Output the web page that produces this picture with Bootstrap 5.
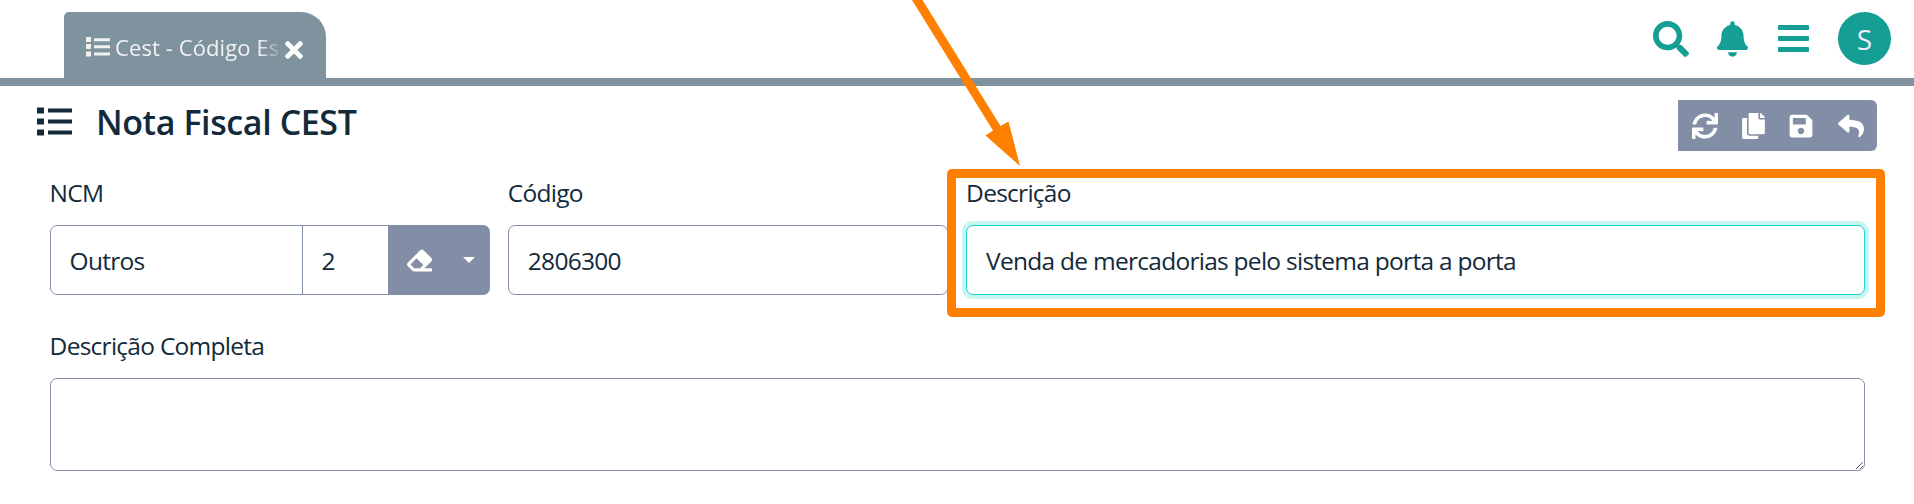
<!DOCTYPE html>
<html lang="pt-BR">
<head>
<meta charset="utf-8">
<meta name="viewport" content="width=device-width, initial-scale=1">
<title>Nota Fiscal CEST</title>
<link href="https://cdn.jsdelivr.net/npm/bootstrap@5.3.0/dist/css/bootstrap.min.css" rel="stylesheet">
<style>
  :root { --ink: #132a3a; --slate: #7e939d; --steel: #828ea6; --teal: #159e94; --mark: #ff8000; }
  body { font-family: "Open Sans", "Noto Sans", sans-serif; font-size: 24.5px; letter-spacing: -.73px; color: var(--ink); background: #fff; overflow: hidden; }
  svg { display: block; fill: currentColor; flex: none; }
  .topbar { height: 86px; border-bottom: 8px solid var(--slate); padding: 12px 23px 0 64px; }
  .doc-tab { width: 262px; height: 66px; padding: 0 23px 0 22px; background: var(--slate); color: #f1f1f1; border-radius: 5px 25px 0 0; font-size: 22px; }
  .doc-tab .tab-label { width: 168px; margin-left: 5px; letter-spacing: .1px; line-height: 30px; margin-top: 3px; -webkit-mask-image: linear-gradient(90deg, #000 145px, transparent 168px); mask-image: linear-gradient(90deg, #000 145px, transparent 168px); }
  .doc-tab .tab-close { margin-left: 2px; margin-top: 10px; color: #fff; }
  .doc-tab .tab-icon { margin-top: 4px; }
  .top-icons { height: 53px; color: var(--teal); }
  .avatar { width: 53px; height: 53px; background: var(--teal); color: #eef; font-size: 28px; letter-spacing: 0; margin-left: 29px; }
  .page-head { height: 66px; padding: 14px 37px 0; }
  .page-head h1 { font-size: 34px; font-weight: 600; letter-spacing: -.4px; line-height: 46px; margin: -1px 0 0 24px; }
  .page-head .head-icon { margin-top: -2px; }
  .tools { height: 51px; }
  .tools .btn { border: 0; border-radius: 0; padding: 0 12px; display: flex; align-items: center; }
  .btn-steel, .btn-steel:hover { background: var(--steel); color: #fff; }
  .tools .btn:last-child { border-radius: 0 6px 6px 0; padding-left: 13px; }
  .page-form { padding: 24px 49.4px 0 49.6px; }
  .page-form .row { --bs-gutter-x: 18px; }
  .page-form label { display: block; line-height: 34px; margin-bottom: 15px; }
  .page-form .form-control { height: 70px; font-size: inherit; letter-spacing: inherit; color: var(--ink); border-color: var(--steel); border-radius: 7px; padding: 0 19px; box-shadow: none; }
  .page-form .input-group .form-control:first-child { border-radius: 7px 0 0 7px; flex: 0 0 253px; }
  .page-form .input-group .form-control:nth-child(2) { border-radius: 0; flex: 0 0 87px; }
  .page-form .input-group .btn { border: 0; padding: 0; height: 70px; display: flex; align-items: center; }
  .erase { width: 64px; justify-content: center; }
  .more { width: 39px; border-radius: 0 7px 7px 0 !important; }
  .more::after { margin: 0 0 0 12px !important; border-top-width: 6px !important; border-left-width: 6px !important; border-right-width: 6px !important; }
  .page-form .form-control.active-field { border-color: #20d3c8; box-shadow: 0 0 0 4px #c8f6f1; }
  .page-form textarea.form-control { height: 93px; min-height: 93px; resize: vertical; }
  .second-row { margin-top: 34px; }
  .frame { position: absolute; left: -19px; top: -7px; width: 938px; height: 148px; border: 9px solid var(--mark); border-radius: 5px; pointer-events: none; }
  .pointer { position: absolute; left: 900px; top: 0; color: var(--mark); pointer-events: none; }
</style>
</head>
<body>
<header class="topbar d-flex align-items-start justify-content-between">
  <div class="doc-tab d-flex align-items-center">
    <svg class="tab-icon" width="24" height="20" viewBox="0 0 24 20"><path d="M0 0h5v5H0zM0 7h5v5H0zM0 14.500h5v5H0zM8 1.300h16v3H8zM8 8.300h16v3H8zM8 15.500h16v3H8z"/></svg>
    <div class="tab-label overflow-hidden text-nowrap">Cest - Código Esp</div>
    <svg class="tab-close" width="18" height="26" viewBox="0 0 352 512"><path d="M242.72 256l100.07-100.07c12.28-12.28 12.28-32.19 0-44.48l-22.24-22.24c-12.28-12.28-32.19-12.28-44.48 0L176 189.28 75.93 89.21c-12.28-12.28-32.19-12.28-44.48 0L9.21 111.45c-12.28 12.28-12.28 32.19 0 44.48L109.28 256 9.21 356.07c-12.28 12.28-12.28 32.19 0 44.48l22.24 22.24c12.28 12.28 32.2 12.28 44.48 0L176 322.72l100.07 100.07c12.28 12.28 32.2 12.28 44.48 0l22.24-22.24c12.28-12.28 12.28-32.19 0-44.48L242.72 256z"/></svg>
  </div>
  <nav class="top-icons d-flex align-items-center">
    <svg width="36" height="36" viewBox="0 0 512 512"><path d="M505 442.7L405.3 343c-4.5-4.5-10.6-7-17-7H372c27.6-35.3 44-79.7 44-128C416 93.1 322.9 0 208 0S0 93.1 0 208s93.1 208 208 208c48.3 0 92.7-16.4 128-44v16.3c0 6.4 2.5 12.5 7 17l99.7 99.7c9.4 9.4 24.6 9.4 33.9 0l28.3-28.3c9.4-9.4 9.4-24.6.1-34zM208 336c-70.7 0-128-57.2-128-128 0-70.7 57.2-128 128-128 70.7 0 128 57.2 128 128 0 70.7-57.2 128-128 128z"/></svg>
    <svg style="margin-left:28px" width="31" height="36" viewBox="0 0 448 512"><path d="M224 512c35.32 0 63.97-28.65 63.97-64H160.03c0 35.35 28.65 64 63.97 64zm215.39-149.71c-19.32-20.76-55.47-51.99-55.47-154.29 0-77.7-54.48-139.9-127.94-155.16V32c0-17.67-14.32-32-31.98-32s-31.98 14.33-31.98 32v20.84C118.56 68.1 64.08 130.3 64.08 208c0 102.3-36.15 133.53-55.47 154.29-6 6.45-8.66 14.16-8.61 21.71.11 16.4 12.98 32 32.1 32h383.8c19.12 0 32-15.6 32.1-32 .05-7.55-2.61-15.27-8.61-21.71z"/></svg>
    <svg style="margin-left:30px" width="31" height="27" viewBox="0 0 31 27"><rect width="31" height="5" rx="1"/><rect y="11" width="31" height="5" rx="1"/><rect y="22" width="31" height="5" rx="1"/></svg>
    <div class="avatar rounded-circle d-flex align-items-center justify-content-center">S</div>
  </nav>
</header>

<section class="page-head d-flex align-items-start justify-content-between">
  <div class="d-flex align-items-center">
    <svg class="head-icon" width="35" height="29" viewBox="0 0 35 29"><path d="M0 .5h7v6H0zM0 11.500h7v6H0zM0 22.500h7v6H0zM11 1.500h24v4H11zM11 12.500h24v4H11zM11 23.500h24v4H11z"/></svg>
    <h1>Nota Fiscal CEST</h1>
  </div>
  <div class="tools d-flex">
    <button class="btn btn-steel" type="button" aria-label="Atualizar"><svg style="margin-left:2px" width="26" height="26" viewBox="0 0 512 512"><path d="M440.65 12.57l4 82.77A247.16 247.16 0 0 0 255.83 8C134.73 8 33.91 94.92 12.29 209.82A12 12 0 0 0 24.09 224h49.05a12 12 0 0 0 11.67-9.26 175.91 175.91 0 0 1 317-56.94l-101.46-4.86a12 12 0 0 0-12.57 12v47.41a12 12 0 0 0 12 12H500a12 12 0 0 0 12-12V12a12 12 0 0 0-12-12h-47.37a12 12 0 0 0-11.98 12.57zM255.83 432a175.61 175.61 0 0 1-146-77.8l101.8 4.87a12 12 0 0 0 12.57-12v-47.4a12 12 0 0 0-12-12H12a12 12 0 0 0-12 12V500a12 12 0 0 0 12 12h47.35a12 12 0 0 0 12-12.6l-4.15-82.57A247.17 247.17 0 0 0 255.83 504c121.11 0 221.93-86.92 243.55-201.82a12 12 0 0 0-11.8-14.18h-49.05a12 12 0 0 0-11.67 9.26A175.86 175.86 0 0 1 255.83 432z"/></svg></button>
    <button class="btn btn-steel" type="button" aria-label="Copiar"><svg width="23" height="26" viewBox="0 0 448 512"><path d="M320 448v40c0 13.255-10.745 24-24 24H24c-13.255 0-24-10.745-24-24V120c0-13.255 10.745-24 24-24h72v296c0 30.879 25.121 56 56 56h168zm0-344V0H152c-13.255 0-24 10.745-24 24v368c0 13.255 10.745 24 24 24h272c13.255 0 24-10.745 24-24V128H344c-13.2 0-24-10.8-24-24zm120.971-31.029L375.029 7.029A24 24 0 0 0 358.059 0H352v96h96v-6.059a24 24 0 0 0-7.029-16.97z"/></svg></button>
    <button class="btn btn-steel" type="button" aria-label="Salvar"><svg width="24" height="26" viewBox="0 0 448 512"><path d="M433.941 129.941l-83.882-83.882A48 48 0 0 0 316.118 32H48C21.49 32 0 53.49 0 80v352c0 26.51 21.49 48 48 48h352c26.51 0 48-21.49 48-48V163.882a48 48 0 0 0-14.059-33.941zM224 416c-35.346 0-64-28.654-64-64 0-35.346 28.654-64 64-64s64 28.654 64 64c0 35.346-28.654 64-64 64zm96-304.52V212c0 6.627-5.373 12-12 12H76c-6.627 0-12-5.373-12-12V108c0-6.627 5.373-12 12-12h228.52c3.183 0 6.235 1.264 8.485 3.515l3.48 3.48A11.996 11.996 0 0 1 320 111.48z"/></svg></button>
    <button class="btn btn-steel" type="button" aria-label="Voltar"><svg style="margin-right:1px" width="26" height="26" viewBox="0 0 512 512"><path d="M8.309 189.836L184.313 37.851C199.719 24.546 224 35.347 224 56.015v80.053c160.629 1.839 288 34.032 288 186.258 0 61.441-39.581 122.309-83.333 154.132-13.653 9.931-33.111-2.533-28.077-18.631 45.344-145.012-21.507-183.51-176.59-185.742V360c0 20.7-24.3 31.453-39.687 18.164l-176.004-152c-11.071-9.562-11.086-26.753 0-36.328z"/></svg></button>
  </div>
</section>

<form class="page-form">
  <div class="row">
    <div class="col-3">
      <label for="ncm">NCM</label>
      <div class="input-group flex-nowrap">
        <input id="ncm" class="form-control" type="text" value="Outros">
        <input class="form-control" type="text" value="2" aria-label="Código NCM">
        <button class="btn btn-steel erase" type="button" aria-label="Limpar"><svg width="25" height="25" viewBox="0 0 512 512"><path d="M497.941 273.941c18.745-18.745 18.745-49.137 0-67.882l-160-160c-18.745-18.745-49.136-18.746-67.883 0l-256 256c-18.745 18.745-18.745 49.137 0 67.882l96 96A48.004 48.004 0 0 0 144 480h356c6.627 0 12-5.373 12-12v-40c0-6.627-5.373-12-12-12H355.883l142.058-142.059zm-302.627-62.627l137.373 137.373L265.373 416H150.628l-80-80 124.686-124.686z"/></svg></button>
        <button class="btn btn-steel more dropdown-toggle" type="button" aria-label="Mais opções"></button>
      </div>
    </div>
    <div class="col-3">
      <label for="codigo">Código</label>
      <input id="codigo" class="form-control" type="text" value="2806300">
    </div>
    <div class="col-6">
      <div class="position-relative">
        <label for="descricao">Descrição</label>
        <input id="descricao" class="form-control active-field" type="text" value="Venda de mercadorias pelo sistema porta a porta">
        <div class="frame"></div>
      </div>
    </div>
  </div>
  <div class="second-row">
    <label for="completa">Descrição Completa</label>
    <textarea id="completa" class="form-control"></textarea>
  </div>
</form>

<svg class="pointer" width="130" height="170" viewBox="900 0 130 170"><path d="M912 0h10.500L1000.500 126l8-4.500L1020 166l-34.500-30.500 7.500-5z"/></svg>
<script src="https://cdn.jsdelivr.net/npm/bootstrap@5.3.0/dist/js/bootstrap.bundle.min.js"></script>
</body>
</html>
